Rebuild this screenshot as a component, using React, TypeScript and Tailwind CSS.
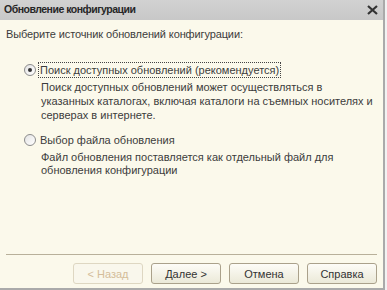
import React from "react";

const font = { fontFamily: '"Liberation Sans", Arial, sans-serif' };

function Radio({ checked }: { checked?: boolean }) {
  return (
    <span className="flex h-[12px] w-[12px] shrink-0 items-center justify-center rounded-full border border-[#8c8c8c] bg-gradient-to-br from-[#e4e4e4] to-[#ffffff]">
      {checked && <span className="h-[4px] w-[4px] rounded-full bg-[#333333]" />}
    </span>
  );
}

function Btn({ label, disabled }: { label: string; disabled?: boolean }) {
  return (
    <div
      className={
        "flex h-[21px] w-[70px] items-center justify-center rounded-[3px] border text-[11px] " +
        (disabled
          ? "border-[#ded7c2] bg-[#f9f7ec] text-[#d4bd9a]"
          : "border-[#aaa18b] bg-gradient-to-b from-[#fdfcf7] to-[#ebe9d8] text-[#333333]")
      }
    >
      {label}
    </div>
  );
}

export default function App() {
  return (
    <div className="flex h-[290px] w-[387px] bg-[#f2f2f2]" style={font}>
      <div className="flex h-[290px] w-[385px] flex-col border-b-2 border-r-2 border-[#aaaaaa] bg-[#fbf9eb]">
        <div className="flex h-[20px] shrink-0 items-center justify-between bg-gradient-to-b from-[#d2d2d2] to-[#c8c8c8] pl-[4px] pr-[5px]">
          <span className="text-[10.5px] font-bold tracking-[-0.5px] text-[#262626]">Обновление конфигурации</span>
          <svg width="11" height="10" viewBox="0 0 11 10">
            <path d="M1 1 L10 9 M10 1 L1 9" stroke="#333" strokeWidth="2.2" />
          </svg>
        </div>
        <div className="flex flex-1 flex-col px-[6px] text-[11px] leading-[14px] text-[#3c3c3c]">
          <div className="mt-[7px] tracking-[-0.12px]">Выберите источник обновлений конфигурации:</div>
          <div className="mt-[21px] flex items-center pl-[18px]">
            <Radio checked />
            <span className="ml-[2px] border border-dotted border-[#444] px-[1px]">
              Поиск доступных обновлений (рекомендуется)
            </span>
          </div>
          <div className="mt-[2px] pl-[35px]">
            Поиск доступных обновлений может осуществляться в<br />
            указанных каталогах, включая каталоги на съемных носителях и<br />
            серверах в интернете.
          </div>
          <div className="mt-[10px] flex items-center pl-[18px]">
            <Radio />
            <span className="ml-[2px] border border-transparent px-[1px]">Выбор файла обновления</span>
          </div>
          <div className="mt-[3px] pl-[35px] leading-[13px]">
            Файл обновления поставляется как отдельный файл для<br />
            обновления конфигурации
          </div>
          <div className="flex-1" />
          <div className="h-[1px] bg-[#b8b09a]" />
          <div className="mb-[4px] mt-[8px] flex justify-end gap-[8px]">
            <Btn label="< Назад" disabled />
            <Btn label="Далее >" />
            <Btn label="Отмена" />
            <Btn label="Справка" />
          </div>
        </div>
      </div>
    </div>
  );
}
